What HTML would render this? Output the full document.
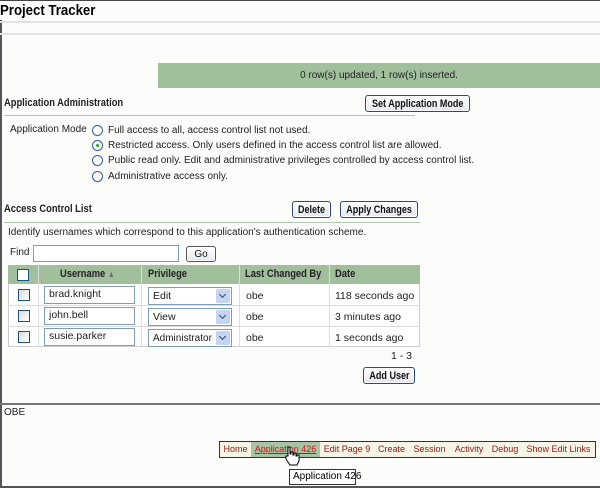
<!DOCTYPE html>
<html><head><style>
*{margin:0;padding:0;box-sizing:border-box}
body{width:600px;height:488px;background:#fcfdfb;font-family:"Liberation Sans",sans-serif;font-size:10px;color:#222;position:relative;overflow:hidden;white-space:nowrap}
.a{position:absolute;white-space:nowrap}
.btn{position:absolute;border:1px solid #2a4a7a;border-radius:3px;background:linear-gradient(#fff,#e4e8f0);font-weight:bold;font-size:11px;color:#111;box-shadow:inset 0 0 0 1px #fff;display:flex;justify-content:center;align-items:center}
.btn span,.bb span{display:inline-block;transform:scaleX(.82)}
.bb{font-weight:bold;font-size:11px;transform:scaleX(.85);transform-origin:left}
.radio{position:absolute;width:11px;height:11px;border:1px solid #2f5c9a;border-radius:50%;background:#fff}
.in{position:absolute;border:1px solid #7f9db9;background:#fff;font-size:10.5px;padding:1px 4px;height:18px}
.sel{position:absolute;border:1px solid #7f9db9;background:#fff;height:18px;padding:2px 4px;font-size:10.5px;overflow:hidden}
.sel i{position:absolute;right:1px;top:1px;width:14px;height:14px;background:#c4d4f4;border-radius:2px}
.sel i:after{content:"";position:absolute;left:4px;top:3px;width:4px;height:4px;border-right:1.5px solid #345;border-bottom:1.5px solid #345;transform:rotate(45deg)}
.cb{position:absolute;width:12px;height:12px;border:1px solid #1c5180;background:linear-gradient(135deg,#dcdcd6,#fff)}
.nav{position:absolute;top:441px;height:17px;border:1px solid #333;border-left:none;background:#f6f4e4;color:#8a1a1a;font-size:9px;line-height:15px;text-align:center;white-space:nowrap}
.t{font-size:10.5px}
</style></head><body>
<div class="a" style="left:0;top:0;width:600px;height:1px;background:#444"></div>
<div class="a" style="left:0;top:20px;width:2px;height:468px;background:#555"></div>
<div class="a" style="left:0;top:486px;width:600px;height:2px;background:#555"></div>
<div class="a" style="left:0;top:2px;font-size:15px;font-weight:bold;color:#000;transform:scaleX(.88);transform-origin:left">Project Tracker</div>
<div class="a" style="left:0;top:21px;width:600px;height:2px;background:#e2e2e2"></div>
<div class="a" style="left:0;top:33px;width:600px;height:2px;background:#e2e2e2"></div>
<div class="a" style="left:158px;top:63px;width:442px;height:25px;background:#a1bf9d;text-align:center;line-height:25px;color:#222">0 row(s) updated, 1 row(s) inserted.</div>
<div class="a bb" style="left:4px;top:97px">Application Administration</div>
<div class="btn" style="left:365px;top:95px;width:105px;height:17px"><span>Set Application Mode</span></div>
<div class="a" style="left:4px;top:115px;width:411px;height:1px;background:#b4c8b0"></div>
<div class="a" style="left:10px;top:124px">Application Mode</div>
<div class="radio" style="left:92px;top:125px"></div>
<div class="radio" style="left:92px;top:140px"><div style="position:absolute;left:3px;top:3px;width:3px;height:3px;border-radius:50%;background:#2a2"></div></div>
<div class="radio" style="left:92px;top:155px"></div>
<div class="radio" style="left:92px;top:171px"></div>
<div class="a" style="left:108px;top:125px">Full access to all, access control list not used.</div>
<div class="a" style="left:108px;top:140px">Restricted access. Only users defined in the access control list are allowed.</div>
<div class="a" style="left:108px;top:155px">Public read only. Edit and administrative privileges controlled by access control list.</div>
<div class="a" style="left:108px;top:171px">Administrative access only.</div>
<div class="a bb" style="left:4px;top:203px">Access Control List</div>
<div class="btn" style="left:292px;top:201px;width:39px;height:17px"><span>Delete</span></div>
<div class="btn" style="left:340px;top:201px;width:78px;height:17px"><span>Apply Changes</span></div>
<div class="a" style="left:4px;top:222px;width:416px;height:1px;background:#b4c8b0"></div>
<div class="a" style="left:8px;top:227px">Identify usernames which correspond to this application's authentication scheme.</div>
<div class="a" style="left:10px;top:247px">Find</div>
<div class="in" style="left:33px;top:245px;width:146px;height:17px"></div>
<div class="btn" style="left:186px;top:246px;width:30px;height:16px;font-weight:normal;font-size:10px;border-color:#555">Go</div>
<div class="a" style="left:8px;top:265px;width:412px;height:82px;background:#fff;border:1px solid #ccc"></div>
<div class="a" style="left:8px;top:265px;width:412px;height:19px;background:#a1bf9d"></div>
<div class="a" style="left:38px;top:265px;width:1px;height:82px;background:#ddd"></div>
<div class="a" style="left:141px;top:265px;width:1px;height:82px;background:#ddd"></div>
<div class="a" style="left:239px;top:265px;width:1px;height:82px;background:#ddd"></div>
<div class="a" style="left:329px;top:265px;width:1px;height:82px;background:#ddd"></div>
<div class="a" style="left:8px;top:305px;width:412px;height:1px;background:#ddd"></div>
<div class="a" style="left:8px;top:326px;width:412px;height:1px;background:#ddd"></div>
<div class="cb" style="left:17px;top:269px;background:#fff"></div>
<div class="a bb" style="left:60px;top:268px">Username <span style="color:#666;font-size:9px">&#9650;</span></div>
<div class="a bb" style="left:148px;top:268px">Privilege</div>
<div class="a bb" style="left:245px;top:268px">Last Changed By</div>
<div class="a bb" style="left:335px;top:268px">Date</div>
<div class="cb" style="left:18px;top:289px"></div>
<div class="cb" style="left:18px;top:310px"></div>
<div class="cb" style="left:18px;top:331px"></div>
<div class="in" style="left:44px;top:286px;width:91px">brad.knight</div>
<div class="in" style="left:44px;top:307px;width:91px">john.bell</div>
<div class="in" style="left:44px;top:328px;width:91px">susie.parker</div>
<div class="sel" style="left:148px;top:287px;width:84px">Edit<i></i></div>
<div class="sel" style="left:148px;top:308px;width:84px">View<i></i></div>
<div class="sel" style="left:148px;top:329px;width:84px;font-size:10px;padding-top:3px">Administrator<i></i></div>
<div class="a t" style="left:246px;top:290px">obe</div>
<div class="a t" style="left:246px;top:311px">obe</div>
<div class="a t" style="left:246px;top:332px">obe</div>
<div class="a t" style="left:335px;top:290px">118 seconds ago</div>
<div class="a t" style="left:335px;top:311px">3 minutes ago</div>
<div class="a t" style="left:335px;top:332px">1 seconds ago</div>
<div class="a t" style="left:391px;top:350px">1 - 3</div>
<div class="btn" style="left:363px;top:367px;width:52px;height:17px"><span>Add User</span></div>
<div class="a" style="left:0;top:403px;width:600px;height:2px;background:#777"></div>
<div class="a" style="left:4px;top:407px">OBE</div>
<div class="a" style="left:219px;top:441px;width:1px;height:17px;background:#333"></div>
<div class="nav" style="left:220px;width:32px">Home</div>
<div class="nav" style="left:251px;width:70px;background:#a9c3a5;color:#d01010;text-decoration:underline">Application 426</div>
<div class="nav" style="left:320px;width:55px">Edit Page 9</div>
<div class="nav" style="left:374px;width:36px">Create</div>
<div class="nav" style="left:409px;width:42px">Session</div>
<div class="nav" style="left:450px;width:39px">Activity</div>
<div class="nav" style="left:488px;width:35px">Debug</div>
<div class="nav" style="left:522px;width:74px">Show Edit Links</div>
<div class="a" style="left:289px;top:469px;width:67px;height:16px;background:#fff;border:1px solid #333;font-size:10px;line-height:14px;padding-left:3px;color:#000">Application 426</div>
<svg class="a" style="left:284px;top:446px" width="16" height="20" viewBox="0 0 16 20"><path d="M4 1h2v7h1V6h2v3h1V7h2v3h1V9h2v6l-2 4H6L2 13V10h2z" fill="#fff" stroke="#000" stroke-width="1"/></svg>
</body></html>
